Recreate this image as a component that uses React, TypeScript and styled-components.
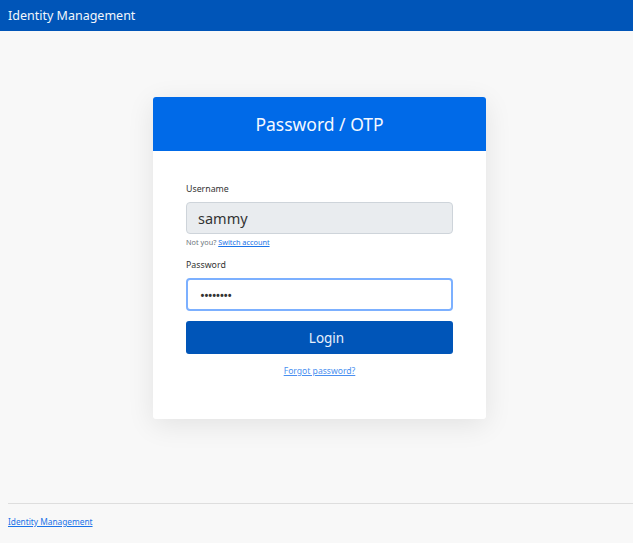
import React, { ReactElement } from 'react'
import styled, { createGlobalStyle } from 'styled-components'

const FONT = `'Noto Sans', 'Open Sans', sans-serif`

const GlobalStyle = createGlobalStyle`
  html, body {
    margin: 0;
    padding: 0;
    background: #f8f8f8;
    font-family: ${FONT};
  }
  * {
    box-sizing: border-box;
  }
`

const Page = styled.div`
  display: flex;
  flex-direction: column;
  min-height: 543px;
`

const TopBar = styled.header`
  height: 31px;
  display: flex;
  align-items: center;
  padding: 0 8px;
  background: #0055b8;
  color: #f2f6fb;
  font-size: 12.5px;
`

const Main = styled.main`
  flex: 1;
  display: flex;
  justify-content: center;
  align-items: flex-start;
  padding: 66px 0 0 6px;
`

const Card = styled.section`
  width: 333px;
  background: #ffffff;
  border-radius: 3px;
  box-shadow: 0 6px 28px rgba(0, 0, 0, 0.09);
  overflow: hidden;
`

const CardHeader = styled.div`
  height: 54px;
  padding-bottom: 1px;
  display: flex;
  align-items: center;
  justify-content: center;
  background: #006ae8;
  color: #f4f8ff;
  font-size: 17.5px;
`

const CardBody = styled.form`
  display: flex;
  flex-direction: column;
  padding: 32px 33px 42px;
`

const Label = styled.label<{ $gap?: number }>`
  display: block;
  margin-top: ${(p) => p.$gap ?? 0}px;
  margin-bottom: 7px;
  font-size: 8.8px;
  line-height: 12px;
  color: #333;
`

const Input = styled.input<{ $focused?: boolean }>`
  width: 100%;
  height: ${(p) => (p.$focused ? 33 : 32)}px;
  padding: 0 ${(p) => (p.$focused ? 12 : 11)}px;
  font-family: ${FONT};
  font-size: ${(p) => (p.$focused ? 13 : 14.5)}px;
  color: #333;
  border-radius: 4px;
  outline: none;
  border: ${(p) => (p.$focused ? '2px solid #7cb0ff' : '1px solid #ced4da')};
  background: ${(p) => (p.$focused ? '#ffffff' : '#e9ecef')};
  letter-spacing: ${(p) => (p.$focused ? '-1px' : 'normal')};
  caret-color: #000;
`

const Hint = styled.div`
  margin-top: 3px;
  font-size: 7.3px;
  line-height: 10px;
  color: #6c757d;
`

const InlineLink = styled.a`
  color: #1a73e8;
  text-decoration: underline;
  cursor: pointer;
`

const SubmitButton = styled.button`
  margin-top: 10px;
  height: 33px;
  width: 100%;
  padding: 0 0 0 14px;
  border: none;
  border-radius: 3px;
  background: #0055b8;
  color: #e8f0fc;
  font-family: ${FONT};
  font-size: 13.5px;
  cursor: pointer;
`

const Forgot = styled(InlineLink)`
  margin-top: 11px;
  align-self: center;
  font-size: 8.6px;
  line-height: 12px;
  color: #4a8ff0;
`

const Footer = styled.footer`
  margin-left: 8px;
  border-top: 1px solid #dedede;
  padding: 12px 0 15px;
  font-size: 8.3px;
  line-height: 12px;
`

const App = (): ReactElement => {
  return (
    <>
      <GlobalStyle />
      <Page>
        <TopBar>Identity Management</TopBar>
        <Main>
          <Card>
            <CardHeader>Password / OTP</CardHeader>
            <CardBody onSubmit={(e): void => e.preventDefault()}>
              <Label>Username</Label>
              <Input value="sammy" disabled readOnly />
              <Hint>
                Not you? <InlineLink>Switch account</InlineLink>
              </Hint>
              <Label $gap={12}>Password</Label>
              <Input $focused type="password" defaultValue="password" autoFocus />
              <SubmitButton type="submit">Login</SubmitButton>
              <Forgot>Forgot password?</Forgot>
            </CardBody>
          </Card>
        </Main>
        <Footer>
          <InlineLink>Identity Management</InlineLink>
        </Footer>
      </Page>
    </>
  )
}

export default App
